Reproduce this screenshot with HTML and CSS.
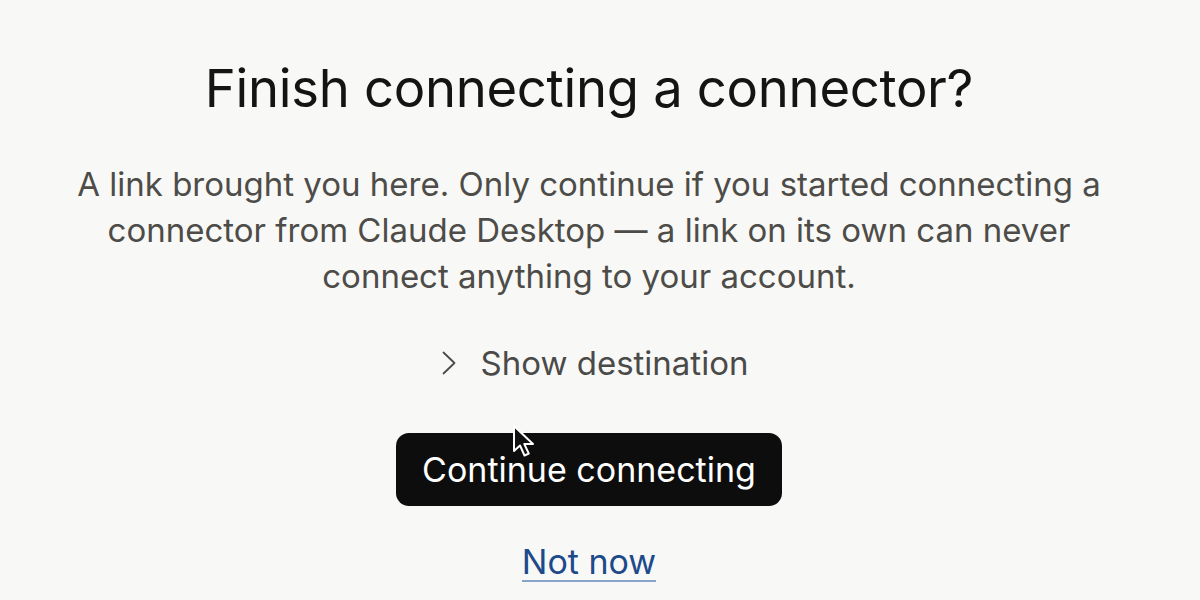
FILE: index.html
```html
<!DOCTYPE html>
<html lang="en">
<head>
    <meta charset="UTF-8">
    <meta name="viewport" content="width=device-width, initial-scale=1.0">
    <title>Finish connecting a connector?</title>
    <link rel="stylesheet" href="styles.css">
</head>
<body>

<div class="page">
    <h1 class="title">Finish connecting a connector?</h1>

    <p class="intro">A link brought you here. Only continue if you started connecting a connector from Claude Desktop — a link on its own can never connect anything to your account.</p>

    <button class="toggle" type="button">
        <svg class="chevron" width="16" height="26" viewBox="0 0 16 26">
            <path d="M2.5 2.5 L13.5 13 L2.5 23.5" fill="none" stroke="#4a4a48" stroke-width="1.8" stroke-linecap="round" stroke-linejoin="round"/>
        </svg>
        <span>Show destination</span>
    </button>

    <div class="actions">
        <button class="primary" type="button">Continue connecting</button>
        <svg class="cursor" width="30" height="36" viewBox="0 0 30 36">
            <path d="M2 2 L2 27 L8 21.5 L12.5 31.5 L16.8 29.6 L12.3 20 L21 20 Z" fill="#111" stroke="#fff" stroke-width="2" stroke-linejoin="round"/>
        </svg>
    </div>

    <a class="later" href="#">Not now</a>
</div>

</body>
</html>
```

FILE: styles.css
```css
html, body {
    margin: 0;
    padding: 0;
    background-color: #f8f8f6;
}

body {
    font-family: Inter, "Noto Sans", sans-serif;
    color: #141413;
}

.page {
    display: flex;
    flex-direction: column;
    align-items: center;
    padding: 54px 22px 0 0;
}

.title {
    margin: 0;
    font-size: 52.6px;
    font-weight: 400;
    line-height: 68px;
    letter-spacing: -0.3px;
}

.intro {
    margin: 39px 0 0;
    max-width: 1040px;
    text-align: center;
    font-size: 33px;
    line-height: 46px;
    color: #4d4c48;
}

.toggle {
    display: flex;
    align-items: center;
    gap: 24px;
    margin: 44px 0 0 11px;
    padding: 0;
    border: none;
    background: none;
    font-family: inherit;
    font-size: 33px;
    color: #4a4a48;
    cursor: pointer;
}

.actions {
    position: relative;
    margin-top: 50px;
}

.primary {
    display: block;
    width: 386px;
    height: 73px;
    border: none;
    border-radius: 13px;
    background-color: #0d0d0d;
    color: #ffffff;
    font-family: inherit;
    font-size: 34px;
    cursor: pointer;
}

.cursor {
    position: absolute;
    left: 116px;
    top: -9px;
}

.later {
    margin-top: 38px;
    font-size: 34px;
    line-height: 36px;
    color: #1d4a8a;
    text-decoration: none;
    border-bottom: 2px solid #8aa3c8;
}
```
